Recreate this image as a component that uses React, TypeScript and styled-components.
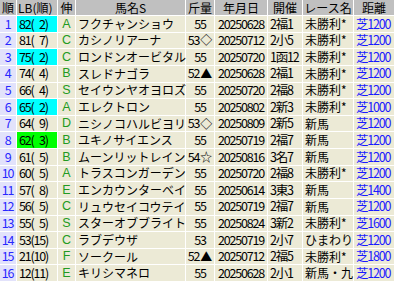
import styled, { createGlobalStyle } from "styled-components";

const GlobalStyle = createGlobalStyle`
  html, body {
    margin: 0;
    padding: 0;
    background: #ffffff;
  }
  body {
    font-family: "Noto Sans CJK JP", "Noto Sans", sans-serif;
    font-size: 12px;
    color: #000000;
  }
`;

const COLS = "16px 40px 17px 109px 28px 52px 34px 50px 40px";

const Table = styled.div`
  width: 394px;
  height: 281px;
  display: flex;
  flex-direction: column;
  gap: 1px;
  background: #ffffff;
  overflow: hidden;
`;

const HeaderRow = styled.div`
  display: grid;
  grid-template-columns: ${COLS};
  column-gap: 1px;
  height: 15px;
  flex: none;
`;

const Row = styled.div`
  display: grid;
  grid-template-columns: ${COLS};
  column-gap: 1px;
  flex: 1;
  min-height: 0;
`;

const HeadCell = styled.div<{ $align?: string }>`
  background: #c0c0c0;
  display: flex;
  align-items: center;
  justify-content: ${(p) => p.$align || "center"};
  padding-left: ${(p) => (p.$align === "flex-start" ? "1px" : "0")};
  white-space: nowrap;
  overflow: hidden;
  line-height: 1;
`;

const Cell = styled.div<{ $align?: string; $bg?: string; $num?: boolean }>`
  background: ${(p) => p.$bg || "#ecead6"};
  color: #000000;
  display: flex;
  align-items: center;
  justify-content: ${(p) => p.$align || "flex-start"};
  padding-left: ${(p) => (p.$align === "center" ? "0" : "2px")};
  font-size: ${(p) => (p.$num ? "12.5px" : "12px")};
  letter-spacing: ${(p) => (p.$num ? "-1.2px" : "0")};
  white-space: nowrap;
  overflow: visible;
  line-height: 1;
`;

const RankCell = styled(Cell)`
  background: #e2e2fb;
  color: #2828ff;
  justify-content: center;
  padding-left: 0;
  padding-right: 1px;
`;

const GradeCell = styled(Cell)`
  color: #229a22;
  justify-content: center;
  padding-left: 0;
  font-family: "Liberation Sans", sans-serif;
  font-size: 12.5px;
`;

const DistCell = styled(Cell)`
  color: #1a1aff;
`;

// keeps the single-digit rank right-aligned inside the brackets: "82( 2)"
const Pad = styled.span`
  display: inline-block;
  width: 5.5px;
`;

const Mark = styled.span`
  font-size: 12px;
  letter-spacing: 0;
  margin-left: 1px;
`;

type Horse = {
  lb: number;
  pos: number;
  mark?: "cyan" | "green";
  grade: string;
  name: string;
  weight: string;
  sym?: string;
  date: string;
  venue: string;
  race: string;
  dist: string;
};

const rows: Horse[] = [
  { lb: 82, pos: 2, mark: "cyan", grade: "A", name: "フクチャンショウ", weight: "55", date: "20250628", venue: "2福1", race: "未勝利*", dist: "芝1200" },
  { lb: 81, pos: 7, grade: "C", name: "カシノリアーナ", weight: "53", sym: "◇", date: "20250712", venue: "2小5", race: "未勝利*", dist: "芝1200" },
  { lb: 75, pos: 2, mark: "cyan", grade: "C", name: "ロンドンオービタル", weight: "55", date: "20250720", venue: "1函12", race: "未勝利*", dist: "芝1200" },
  { lb: 74, pos: 4, grade: "B", name: "スレドナゴラ", weight: "52", sym: "▲", date: "20250628", venue: "2福1", race: "未勝利*", dist: "芝1200" },
  { lb: 66, pos: 4, grade: "S", name: "セイウンヤオヨロズ", weight: "55", date: "20250720", venue: "2福8", race: "未勝利*", dist: "芝1200" },
  { lb: 65, pos: 2, mark: "cyan", grade: "A", name: "エレクトロン", weight: "55", date: "20250802", venue: "2新3", race: "未勝利*", dist: "芝1000" },
  { lb: 64, pos: 9, grade: "D", name: "ニシノコハルビヨリ", weight: "53", sym: "◇", date: "20250809", venue: "2新5", race: "新馬", dist: "芝1200" },
  { lb: 62, pos: 3, mark: "green", grade: "B", name: "ユキノサイエンス", weight: "55", date: "20250719", venue: "2福7", race: "新馬", dist: "芝1200" },
  { lb: 61, pos: 5, grade: "B", name: "ムーンリットレイン", weight: "54", sym: "☆", date: "20250816", venue: "3名7", race: "新馬", dist: "芝1200" },
  { lb: 60, pos: 5, grade: "A", name: "トラスコンガーデン", weight: "55", date: "20250720", venue: "2福8", race: "未勝利*", dist: "芝1200" },
  { lb: 57, pos: 8, grade: "E", name: "エンカウンターベイ", weight: "55", date: "20250614", venue: "3東3", race: "新馬", dist: "芝1400" },
  { lb: 56, pos: 5, grade: "C", name: "リュウセイコウテイ", weight: "55", date: "20250719", venue: "2福7", race: "新馬", dist: "芝1200" },
  { lb: 55, pos: 5, grade: "S", name: "スターオブブライト", weight: "55", date: "20250824", venue: "3新2", race: "未勝利*", dist: "芝1600" },
  { lb: 53, pos: 15, grade: "C", name: "ラブデウザ", weight: "53", date: "20250719", venue: "2小7", race: "ひまわり", dist: "芝1200" },
  { lb: 21, pos: 10, grade: "F", name: "ソークール", weight: "52", sym: "▲", date: "20250712", venue: "2福5", race: "未勝利*", dist: "芝1800" },
  { lb: 12, pos: 11, grade: "E", name: "キリシマネロ", weight: "55", date: "20250628", venue: "2小1", race: "新馬・九", dist: "芝1200" },
];

const markColor = { cyan: "#00ffff", green: "#00ff00" };

export default function App() {
  return (
    <>
      <GlobalStyle />
      <Table>
        <HeaderRow>
          <HeadCell>順</HeadCell>
          <HeadCell $align="flex-start">LB(順)</HeadCell>
          <HeadCell>伸</HeadCell>
          <HeadCell>馬名S</HeadCell>
          <HeadCell>斤量</HeadCell>
          <HeadCell>年月日</HeadCell>
          <HeadCell>開催</HeadCell>
          <HeadCell>レース名</HeadCell>
          <HeadCell>距離</HeadCell>
        </HeaderRow>
        {rows.map((r, i) => (
          <Row key={`row${i}`}>
            <RankCell $num>{i + 1}</RankCell>
            <Cell $num $bg={r.mark ? markColor[r.mark] : undefined}>
              {`${r.lb}(`}
              {r.pos < 10 && <Pad />}
              {`${r.pos})`}
            </Cell>
            <GradeCell>{r.grade}</GradeCell>
            <Cell>{r.name}</Cell>
            <Cell $num $align="center">
              {r.weight}
              {r.sym && <Mark>{r.sym}</Mark>}
            </Cell>
            <Cell $num $align="center">
              {r.date}
            </Cell>
            <Cell $num>{r.venue}</Cell>
            <Cell>{r.race}</Cell>
            <DistCell $num>{r.dist}</DistCell>
          </Row>
        ))}
      </Table>
    </>
  );
}
